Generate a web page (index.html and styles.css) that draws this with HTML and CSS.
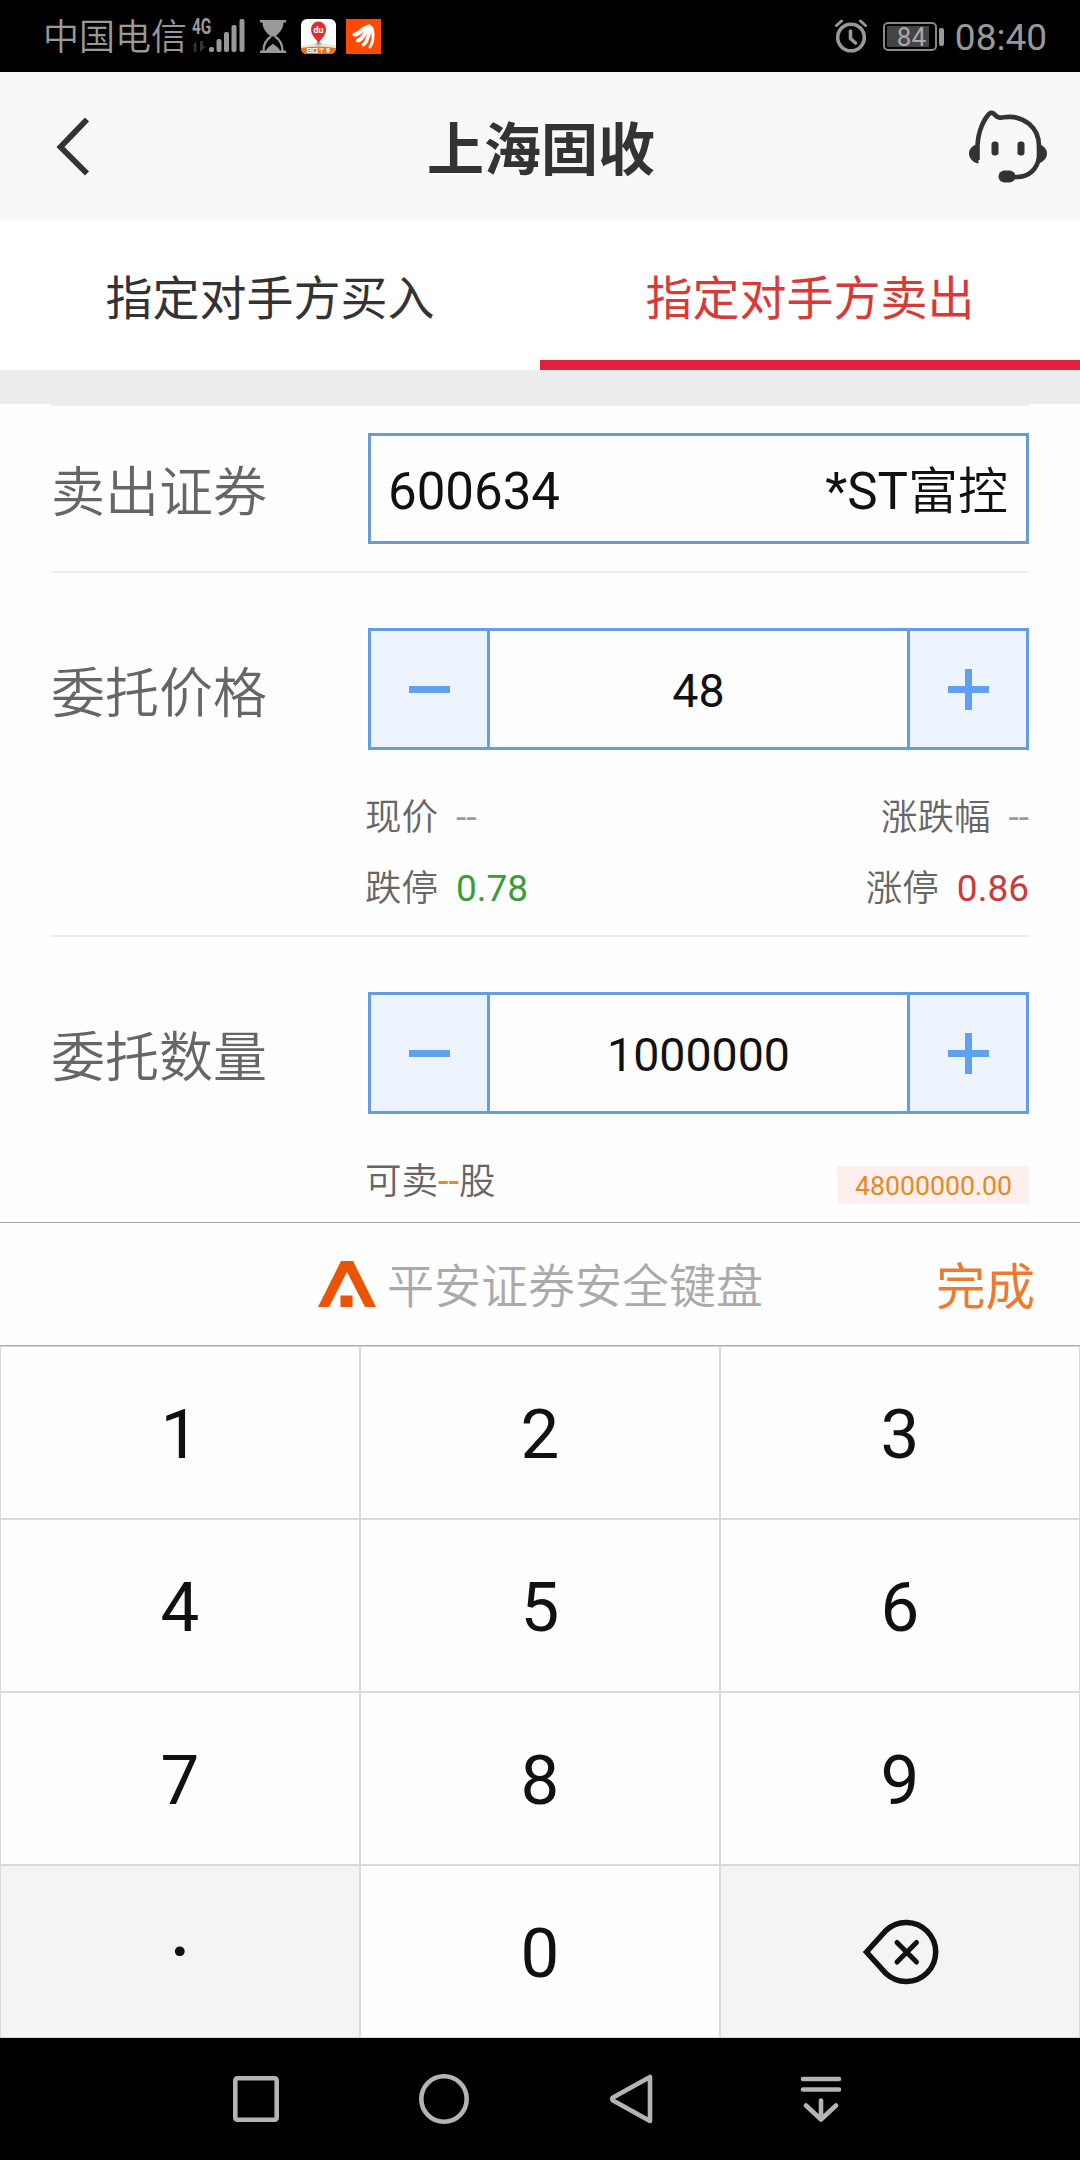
FILE: index.html
```
<!DOCTYPE html>
<html lang="zh-CN">
<head>
    <meta charset="UTF-8">
    <meta name="viewport" content="width=device-width, initial-scale=1.0">
    <title>上海固收</title>
    <link rel="stylesheet" href="styles.css">
</head>
<body>

    <div class="status-bar">
        <span class="carrier">中国电信</span>
        <div class="network">
            <span class="network-type">4G</span>
            <svg class="traffic" width="16" height="12" viewBox="0 0 16 12"><path d="M0 5.500L4.500 0v11H2V5zM8 0v11l6-6h-3V0z" fill="#333"/></svg>
        </div>
        <svg class="signal" width="36" height="34" viewBox="0 0 36 34" fill="#999">
            <rect x="0" y="28" width="5" height="5" rx="2"/>
            <rect x="7.500" y="20" width="5" height="13" rx="2"/>
            <rect x="15" y="13" width="5" height="20" rx="2"/>
            <rect x="22.500" y="6" width="5" height="27" rx="2"/>
            <rect x="30.500" y="0" width="5" height="33" rx="2"/>
        </svg>
        <svg class="hourglass" width="26" height="33" viewBox="0 0 26 33">
            <path d="M0 0h26v2.500H0zM0 30.500h26V33H0zM2.500 2h21c0 7-4 11-8.500 14.500h-4C6.500 13 2.500 9 2.500 2z" fill="#999"/>
            <path d="M11 16.500C7 19 3.500 23 3.500 31M15 16.500c4 2.500 7.500 6.500 7.500 14.500" fill="none" stroke="#999" stroke-width="2.200"/>
            <path d="M6 31c1-4 4-4 7-7.500 3 3.500 6 3.500 7 7.500z" fill="#999"/>
        </svg>
        <svg class="app-map" width="35" height="35" viewBox="0 0 35 35">
            <rect width="35" height="35" rx="6" fill="#fff"/>
            <path d="M0 27l17-3 18 2v5H0z" fill="#e8eccb"/>
            <path d="M14 25l3.500-3 3.500 3-3.500 2z" fill="#8ab6d8"/>
            <path d="M17.500 25c-1-5-7.500-7-7.500-15a7.500 7.500 0 0 1 15 0c0 8-6.500 10-7.500 15z" fill="#e4292f"/>
            <text x="17.500" y="13.500" font-size="9" font-weight="700" text-anchor="middle" fill="#fff">du</text>
            <path d="M0 29q17.500-3 35 0v1q-1 5-6 5H6q-5 0-6-5z" fill="#e8731c"/>
            <path d="M6.500 29.500h3.500v4H6.500zM6.500 31.500H10M12 29.500h4v4h-4zM18 30h5M20.500 29v5M25 30h4M25 32h4M27 29v5" fill="none" stroke="#fff" stroke-width="1.200"/>
        </svg>
        <svg class="app-news" width="35" height="35" viewBox="0 0 35 35">
            <rect width="35" height="35" fill="#ff4a00"/>
            <g fill="none" stroke="#fff" stroke-linecap="round">
                <path d="M8.500 15.500c5 .5 7-6.500 14.500-8" stroke-width="4.200"/>
                <path d="M12 21.500c6-1 6-9 12.500-13" stroke-width="4"/>
                <path d="M17.500 25.500c5-3 4-10 8-16" stroke-width="3.600"/>
                <path d="M24 28c3.500-5 3.500-11 2.500-17.500" stroke-width="3"/>
            </g>
        </svg>
        <div class="status-right">
            <svg width="34" height="34" viewBox="0 0 34 34" fill="none" stroke="#999" stroke-width="3.600" stroke-linecap="round">
                <circle cx="17" cy="18.500" r="13.300"/>
                <path d="M16.500 12v7.500l5 4.500"/>
                <path d="M2.500 6.500L7.500 2M31.500 6.500L26.500 2" stroke-width="3"/>
            </svg>
            <div class="battery"><span class="battery-level">84</span></div>
            <span class="clock">08:40</span>
        </div>
    </div>

    <header class="header">
        <svg class="back" width="34" height="58" viewBox="0 0 34 58"><path d="M31 1.500L4.500 29 31 55.500" fill="none" stroke="#333" stroke-width="5.800"/></svg>
        <h1>上海固收</h1>
        <svg class="service" width="80" height="74" viewBox="0 0 80 74">
            <path d="M9.500 50V36C10 21 16 9 21.500 3.500c2-1.500 4-.5 5.500 1.500 3 3 5 3 9 2.300C56 4.500 71 18 71 36v11c-1.500 12-10 20-22 20h-7" fill="none" stroke="#333" stroke-width="4.600"/>
            <path d="M10.500 34v19.500C4.500 52.500 1 48 1 43.500S4.500 35 10.500 34zM69.500 34v19.500C75.500 52.500 79 48 79 43.500S75.500 35 69.500 34z" fill="#333"/>
            <rect x="23.500" y="31.500" width="7" height="14" rx="3" fill="#333"/>
            <rect x="49.500" y="31.500" width="7" height="14" rx="3" fill="#333"/>
            <rect x="30.500" y="60.500" width="17" height="12" rx="6" fill="#333"/>
        </svg>
    </header>

    <nav class="tabs">
        <a class="tab">指定对手方买入</a>
        <a class="tab active">指定对手方卖出</a>
    </nav>
    <div class="gap"></div>

    <main class="form">
        <section class="row row-stock">
            <label>卖出证券</label>
            <div class="stock-box">
                <span>600634</span>
                <span>*ST<span class="cn">富控</span></span>
            </div>
        </section>

        <section class="row row-price">
            <label>委托价格</label>
            <div class="field">
                <div class="stepper">
                    <button class="minus"></button>
                    <span class="value">48</span>
                    <button class="plus"></button>
                </div>
                <div class="info">
                    <span>现价<em class="none">--</em></span>
                    <span>涨跌幅<em class="none">--</em></span>
                </div>
                <div class="info">
                    <span>跌停<em class="down">0.78</em></span>
                    <span>涨停<em class="up">0.86</em></span>
                </div>
            </div>
        </section>

        <section class="row row-amount">
            <label>委托数量</label>
            <div class="field">
                <div class="stepper">
                    <button class="minus"></button>
                    <span class="value">1000000</span>
                    <button class="plus"></button>
                </div>
                <div class="info">
                    <span>可卖<b>--</b>股</span>
                    <span class="total">48000000.00</span>
                </div>
            </div>
        </section>
    </main>

    <div class="keyboard">
        <div class="keyboard-bar">
            <svg class="logo" width="58" height="46" viewBox="0 0 58 46" fill="#e95504">
                <path d="M23 0h12l23 46H47L29 11 11 46H0z"/>
                <rect x="22.500" y="34.500" width="12" height="11.500"/>
            </svg>
            <span class="keyboard-name">平安证券安全键盘</span>
            <span class="done">完成</span>
        </div>
        <div class="keys">
            <div class="key">1</div>
            <div class="key">2</div>
            <div class="key">3</div>
            <div class="key">4</div>
            <div class="key">5</div>
            <div class="key">6</div>
            <div class="key">7</div>
            <div class="key">8</div>
            <div class="key">9</div>
            <div class="key gray dot">·</div>
            <div class="key">0</div>
            <div class="key gray delete">
                <svg width="78" height="66" viewBox="0 0 78 66" fill="none" stroke="#111">
                    <path d="M4.500 33L24 11.500A29.500 29.500 0 1 1 24 54.500z" stroke-width="5.500"/>
                    <path d="M35 23.500l19.500 19.500M54.500 23.500L35 43" stroke-width="5" stroke-linecap="round"/>
                </svg>
            </div>
        </div>
    </div>

    <div class="nav-bar">
        <svg width="46" height="46" viewBox="0 0 46 46"><rect x="2.300" y="2.300" width="41.400" height="41.400" rx="2"/></svg>
        <svg width="50" height="50" viewBox="0 0 50 50"><circle cx="25" cy="25" r="22.700"/></svg>
        <svg width="44" height="50" viewBox="0 0 44 50"><path d="M41 3v44L4 26.500q-1.500-1.500 0-3z"/></svg>
        <svg class="nav-hide" width="42" height="46" viewBox="0 0 42 46"><path d="M3 3h36M3 13.500h36M21 24.500v18M6 29.500l15 14 15-14"/></svg>
    </div>

</body>
</html>
```

FILE: styles.css
```
* { box-sizing: border-box; margin: 0; padding: 0; }
body {
    width: 1080px; height: 2160px; overflow: hidden;
    font-family: Roboto, "Noto Sans CJK SC", sans-serif;
    background: #fefefe; color: #111;
    display: flex; flex-direction: column;
}
svg { display: block; flex: none; }
em, b { font-style: normal; font-weight: 400; }

/* status bar */
.status-bar {
    height: 72px; flex: none; background: #000; color: #999;
    display: flex; align-items: center; padding: 0 33px 0 43px;
}
.carrier { font-size: 36px; font-weight: 350; line-height: 72px; padding-top: 3px; }
.network { width: 18px; height: 35px; margin-left: 5px; }
.network-type { display: block; font: 700 22px/16px Roboto, sans-serif; transform: scaleX(0.7); transform-origin: left; }
.traffic { margin-top: 6px; }
.signal { margin-left: -1px; }
.hourglass { margin-left: 15px; }
.app-map { margin-left: 15px; }
.app-news { margin-left: 10px; }
.status-right { margin-left: auto; display: flex; align-items: center; }
.battery {
    position: relative; width: 54px; height: 29px; margin-left: 15px; padding: 2px;
    border: 2px solid #888; border-radius: 5px;
}
.battery::after {
    content: ""; position: absolute; right: -9px; top: 4px;
    width: 5px; height: 18px; border-radius: 2px; background: #999;
}
.battery-level {
    display: block; width: 42px; height: 21px; padding-left: 10px;
    background: #444; color: #aaa; font-size: 26px; line-height: 22px;
}
.clock { margin-left: 18px; font-size: 37px; line-height: 72px; padding-top: 3px; }

/* header */
.header {
    height: 149px; flex: none; background: #f8f8f8;
    display: flex; align-items: center;
    padding: 0 32px 0 56px;
}
.header h1 { margin: 8px 0 0 337px; font-size: 57px; font-weight: 700; color: #333; line-height: 80px; }
.service { margin-left: auto; }

.tabs { height: 149px; flex: none; display: flex; background: #fff; }
.tab {
    flex: 1; text-align: center; font-size: 47px; line-height: 149px; padding-top: 3px; color: #333;
}
.tab.active { color: #d83a37; border-bottom: 10px solid #e0233d; }
.gap { height: 34px; flex: none; background: #ececec; }

/* order form */
.form { height: 818px; flex: none; padding: 0 51px; overflow: hidden; }
.row { display: flex; justify-content: space-between; border-top: 2px solid #ececec; }
.row label { font-size: 54px; font-weight: 350; color: #666; line-height: 122px; padding-top: 6px; }
.row-stock { height: 167px; align-items: center; }
.row-stock label { padding-top: 10px; }
.row-price { height: 364px; padding-top: 55px; }
.row-amount { padding-top: 55px; }
.stock-box {
    width: 661px; height: 111px; border: 3px solid #689cd6; padding: 0 18px 0 17px;
    display: flex; align-items: baseline; justify-content: space-between;
    font-size: 51px; line-height: 111px;
}
.stock-box .cn { font-size: 50px; font-weight: 350; }
.field { width: 661px; }
.stepper { height: 122px; display: flex; border: 3px solid #659de2; margin-bottom: 28px; }
.stepper .value {
    flex: 1; text-align: center; font-size: 46.500px; line-height: 120px;
    border: solid #659de2; border-width: 0 3px;
}
.stepper button {
    width: 116px; border: none; background-color: #edf4fe;
    background-image: linear-gradient(#60a0f0, #60a0f0), linear-gradient(#60a0f0, #60a0f0);
    background-repeat: no-repeat; background-position: center; background-size: 41px 7px, 0 0;
}
.stepper .plus { background-size: 41px 7px, 7px 41px; }
.info {
    display: flex; justify-content: space-between; align-items: center;
    height: 71px; margin-left: -3px; padding-top: 1px; font-size: 36.500px; font-weight: 350; color: #666;
}
.info em { margin-left: 18px; font-size: 37px; font-weight: 400; }
.info .none { color: #999; }
.info .down { color: #3a9c3a; }
.info .up { color: #cb3b3b; }
.info b { color: #e8891c; font-size: 38px; }
.info .total {
    width: 191px; height: 38px; margin-top: 14px; line-height: 41px; text-align: center;
    background: #fdefed; color: #e8891c; font-size: 26.700px; font-weight: 400;
}

/* number keyboard */
.keyboard { flex: none; height: 816px; border-top: 1px solid #a0a0a0; }
.keyboard-bar {
    height: 123px; display: flex; align-items: center;
    border-bottom: 1px solid #a8a8a8; padding: 0 45px 0 318px;
}
.keyboard-name { margin: -3px 0 0 11px; font-size: 47px; font-weight: 350; color: #aaa; }
.done { margin: -2px 0 0 auto; font-size: 49.500px; color: #ef7a2d; }
.keys { display: grid; grid-template-columns: repeat(3, 360px); grid-auto-rows: 173px; }
.key {
    display: flex; align-items: center; justify-content: center; padding-top: 4px;
    border: 1px solid #d9d9d9; font-size: 69px; color: #111;
}
.key.gray { background: #f4f4f4; }
.key.dot { font-size: 88px; padding-top: 0; }
.key.delete { padding: 0 0 0 1px; }

/* system navigation */
.nav-bar {
    flex: 1; background: #000; display: flex; align-items: center; padding-left: 233px;
}
.nav-bar svg { fill: none; stroke: #b4b4b4; stroke-width: 4.600; stroke-linecap: round; stroke-linejoin: round; }
.nav-bar svg + svg { margin-left: 140px; }
.nav-bar svg.nav-hide { margin-left: 147px; }
```
